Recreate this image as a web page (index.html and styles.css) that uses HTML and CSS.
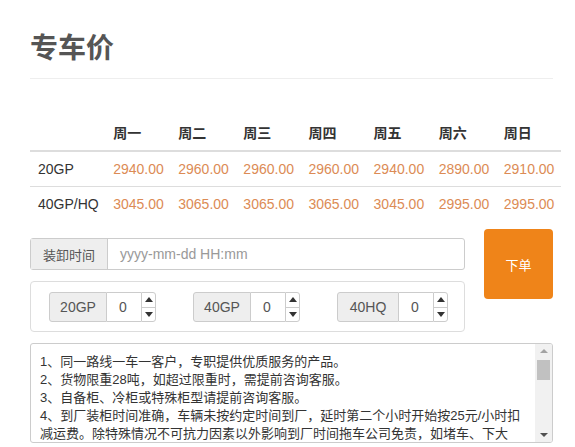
FILE: index.html
```html
<!DOCTYPE html>
<html lang="zh-CN">
<head>
<meta charset="utf-8">
<title>专车价</title>
<link rel="stylesheet" href="styles.css">
</head>
<body>
<div class="page">
  <h2 class="title">专车价</h2>

  <table class="prices">
    <thead>
      <tr>
        <th class="c-label"></th>
        <th>周一</th><th>周二</th><th>周三</th><th>周四</th><th>周五</th><th>周六</th><th>周日</th>
      </tr>
    </thead>
    <tbody>
      <tr>
        <td class="c-label">20GP</td>
        <td class="p">2940.00</td><td class="p">2960.00</td><td class="p">2960.00</td><td class="p">2960.00</td><td class="p">2940.00</td><td class="p">2890.00</td><td class="p">2910.00</td>
      </tr>
      <tr>
        <td class="c-label">40GP/HQ</td>
        <td class="p">3045.00</td><td class="p">3065.00</td><td class="p">3065.00</td><td class="p">3065.00</td><td class="p">3045.00</td><td class="p">2995.00</td><td class="p">2995.00</td>
      </tr>
    </tbody>
  </table>

  <div class="order-row">
    <div class="order-left">
      <div class="input-group">
        <span class="addon">装卸时间</span>
        <span class="field placeholder">yyyy-mm-dd HH:mm</span>
      </div>
      <div class="qty-panel">
        <div class="qty">
          <span class="qty-label">20GP</span>
          <span class="qty-num">0</span>
          <span class="spin"><span class="up"></span><span class="down"></span></span>
        </div>
        <div class="qty">
          <span class="qty-label">40GP</span>
          <span class="qty-num">0</span>
          <span class="spin"><span class="up"></span><span class="down"></span></span>
        </div>
        <div class="qty">
          <span class="qty-label wide">40HQ</span>
          <span class="qty-num">0</span>
          <span class="spin"><span class="up"></span><span class="down"></span></span>
        </div>
      </div>
    </div>
    <div class="order-btn">下单</div>
  </div>

  <div class="notes">
    <div class="notes-text">
      <p>1、同一路线一车一客户，专职提供优质服务的产品。</p>
      <p>2、货物限重28吨，如超过限重时，需提前咨询客服。</p>
      <p>3、自备柜、冷柜或特殊柜型请提前咨询客服。</p>
      <p>4、到厂装柜时间准确，车辆未按约定时间到厂，延时第二个小时开始按25元/小时扣减运费。除特殊情况不可抗力因素以外影响到厂时间拖车公司免责，如堵车、下大雨、大雾等。</p>
    </div>
    <div class="scrollbar">
      <span class="sb-up"></span>
      <span class="sb-thumb"></span>
      <span class="sb-track"></span>
      <span class="sb-down"></span>
    </div>
  </div>
</div>
</body>
</html>
```

FILE: styles.css
```css
* { box-sizing: border-box; }
html, body {
  margin: 0;
  padding: 0;
  background: #fff;
}
body {
  font-family: "Liberation Sans", "Noto Sans CJK SC", sans-serif;
  font-size: 14px;
  color: #333;
  overflow: hidden;
}
.page {
  width: 553px;
  padding: 26px 0 0 30px;
}
.title {
  margin: 0;
  font-family: "Noto Sans CJK SC", sans-serif;
  font-size: 28px;
  font-weight: bold;
  line-height: 40px;
  color: #555;
  padding-bottom: 12px;
  border-bottom: 1px solid #eee;
}
.prices {
  margin-top: 35px;
  border-collapse: collapse;
  width: 531px;
  table-layout: fixed;
}
.prices th, .prices td {
  padding: 8px;
  text-align: left;
  width: 65px;
  white-space: nowrap;
}
.prices th {
  font-family: "Noto Sans CJK SC", sans-serif;
  font-weight: bold;
  line-height: 20px;
  border-bottom: 2px solid #ddd;
  color: #333;
}
.prices td {
  line-height: 18px;
  border-top: 1px solid #ddd;
  color: #333;
}
.prices tbody tr:first-child td { border-top: 0; }
.prices .c-label { width: 75px; }
.prices td.p { color: #dc8b55; }

.order-row {
  display: flex;
  gap: 19px;
  margin-top: 8px;
}
.order-left {
  width: 435px;
  margin-top: 9px;
}
.input-group {
  display: flex;
  height: 32px;
  border: 1px solid #ccc;
  border-radius: 3px;
  font-size: 13px;
}
.addon {
  width: 77px;
  background: #eee;
  border-right: 1px solid #ccc;
  color: #555;
  font-family: "Noto Sans CJK SC", sans-serif;
  display: flex;
  align-items: center;
  justify-content: center;
}
.field {
  flex: 1;
  display: flex;
  align-items: center;
  padding-left: 12px;
  font-size: 14px;
}
.placeholder { color: #999; }

.qty-panel {
  margin-top: 11px;
  border: 1px solid #ddd;
  border-radius: 4px;
  padding: 10px 0 9px 18px;
  display: flex;
  gap: 37px;
}
.qty {
  display: flex;
  height: 30px;
}
.qty-label {
  width: 58px;
  background: #eee;
  border: 1px solid #ccc;
  border-radius: 3px 0 0 3px;
  color: #555;
  display: flex;
  align-items: center;
  justify-content: center;
  font-size: 14px;
}
.qty-label.wide { width: 62px; }
.qty-num {
  width: 34px;
  border-top: 1px solid #ccc;
  border-bottom: 1px solid #ccc;
  display: flex;
  align-items: center;
  padding-left: 12px;
  color: #555;
  font-size: 14px;
}
.spin {
  width: 15px;
  border: 1px solid #ccc;
  border-radius: 0 3px 3px 0;
  display: flex;
  flex-direction: column;
}
.spin .up, .spin .down {
  flex: 1;
  display: flex;
  align-items: center;
  justify-content: center;
}
.spin .up { border-bottom: 1px solid #ccc; }
.spin .up::before {
  content: "";
  border-left: 4px solid transparent;
  border-right: 4px solid transparent;
  border-bottom: 5px solid #333;
}
.spin .down::before {
  content: "";
  border-left: 4px solid transparent;
  border-right: 4px solid transparent;
  border-top: 5px solid #333;
}

.order-btn {
  width: 69px;
  height: 70px;
  background: #ef8419;
  color: #fff;
  border-radius: 4px;
  font-family: "Noto Sans CJK SC", sans-serif;
  font-size: 13px;
  display: flex;
  align-items: center;
  justify-content: center;
}

.notes {
  margin-top: 11px;
  width: 523px;
  height: 100px;
  border: 1px solid #ccc;
  border-radius: 3px;
  display: flex;
  overflow: hidden;
}
.notes-text {
  flex: 1;
  padding: 9px 0 0 9px;
  font-size: 13px;
  line-height: 18px;
  color: #333;
  overflow: hidden;
}
.notes-text p {
  margin: 0;
  width: 488px;
}
.scrollbar {
  width: 17px;
  background: #f1f1f1;
  display: flex;
  flex-direction: column;
  align-items: center;
}
.sb-up, .sb-down {
  height: 14px;
  display: flex;
  align-items: center;
  justify-content: center;
}
.sb-up::before {
  content: "";
  border-left: 4px solid transparent;
  border-right: 4px solid transparent;
  border-bottom: 4px solid #a3a3a3;
}
.sb-down::before {
  content: "";
  border-left: 4px solid transparent;
  border-right: 4px solid transparent;
  border-top: 4px solid #505050;
}
.sb-thumb {
  width: 13px;
  height: 20px;
  margin-top: 2px;
  background: #c1c1c1;
}
.sb-track { flex: 1; }
```
